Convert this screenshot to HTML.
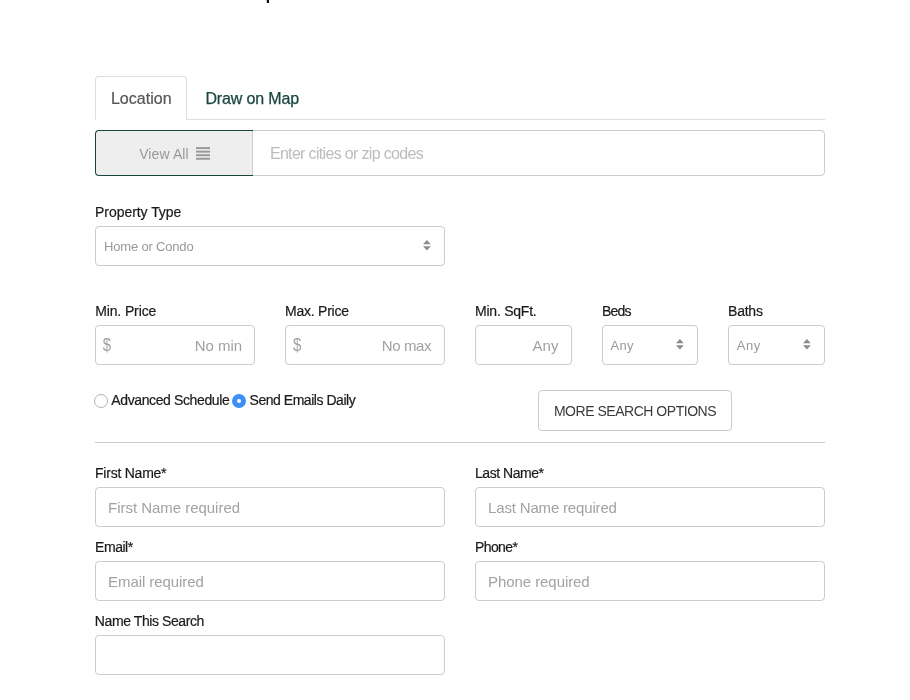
<!DOCTYPE html>
<html lang="en">
<head>
<meta charset="utf-8">
<title>Property Search</title>
<style>
*{box-sizing:border-box;margin:0;padding:0}
html,body{width:910px;height:700px;overflow:hidden;background:#fff}
body{font-family:"Liberation Sans",sans-serif;font-size:14px;color:#222;position:relative;will-change:transform}
.abs{position:absolute;white-space:nowrap}
.t{position:absolute;white-space:nowrap;line-height:20px;height:20px}
.lbl{font-weight:400;color:#1a1a1a;font-size:14px;-webkit-text-stroke:0.2px #1a1a1a}
.box{position:absolute;border:1px solid #ccc;border-radius:4px;background:#fff}
.ph{color:#a2a2a2}
.sv{color:#999}
</style>
</head>
<body>
<!-- heading remnant -->
<h2 class="t" id="h" style="left:132px;top:-26.5px;font-size:26px;line-height:30px;height:30px;color:#111;font-weight:400">Market Snapshot</h2>

<!-- tabs -->
<div class="abs" style="left:95px;top:119px;width:730px;height:1px;background:#ddd"></div>
<div class="abs" id="tab1" style="left:95px;top:76px;width:92px;height:44px;border:1px solid #ddd;border-bottom-color:#fff;border-radius:4px 4px 0 0;background:#fff"></div>
<span class="t" id="t_loc" style="left:110.9px;top:87px;font-size:16px;line-height:23px;height:23px;color:#555;-webkit-text-stroke:0.2px #555;letter-spacing:0.04px">Location</span>
<span class="t" id="t_draw" style="left:205.4px;top:87px;font-size:16px;line-height:23px;height:23px;color:#18453f;-webkit-text-stroke:0.25px #18453f;letter-spacing:-0.15px">Draw on Map</span>

<!-- location input group -->
<div class="box" id="loc_in" style="left:252px;top:130px;width:573px;height:46px;border-radius:0 4px 4px 0"></div>
<div class="abs" id="viewall" style="left:95px;top:130px;width:158px;height:46px;border:1px solid #18453f;border-right:0;border-radius:4px 0 0 4px;background:#eee"></div>
<div class="abs" style="left:252px;top:131px;width:1px;height:44px;background:#ccc"></div>
<span class="t" id="t_view" style="left:139.2px;top:144px;font-size:14px;color:#999;letter-spacing:0.1px">View All</span>
<svg class="abs" id="ic_bars" style="left:196px;top:147px" width="14" height="13" viewBox="0 0 14 13"><g fill="#999"><rect x="0" y="0.1" width="14" height="2"/><rect x="0" y="3.65" width="14" height="2"/><rect x="0" y="7.2" width="14" height="2"/><rect x="0" y="10.75" width="14" height="2"/></g></svg>
<span class="t ph" id="t_enter" style="left:269.9px;top:144px;font-size:16px;color:#bcbcbc;letter-spacing:-0.67px">Enter cities or zip codes</span>

<!-- property type -->
<label class="t lbl" id="l_prop" style="left:95.05px;top:202px;letter-spacing:-0.05px">Property Type</label>
<div class="box" id="sel_prop" style="left:95px;top:226px;width:350px;height:40px"></div>
<span class="t sv" id="t_home" style="left:104px;top:237px;font-size:13px;letter-spacing:-0.18px">Home or Condo</span>

<!-- price row -->
<label class="t lbl" id="l_minp" style="left:95.15px;top:301px;letter-spacing:-0.12px">Min. Price</label>
<label class="t lbl" id="l_maxp" style="left:285px;top:301px;letter-spacing:-0.24px">Max. Price</label>
<label class="t lbl" id="l_sqft" style="left:475.05px;top:301px;letter-spacing:-0.24px">Min. SqFt.</label>
<label class="t lbl" id="l_beds" style="left:602px;top:301px;letter-spacing:-0.83px">Beds</label>
<label class="t lbl" id="l_baths" style="left:728.05px;top:301px;letter-spacing:-0.23px">Baths</label>
<div class="box" style="left:95px;top:325px;width:160px;height:40px"></div>
<div class="box" style="left:285px;top:325px;width:160px;height:40px"></div>
<div class="box" style="left:475px;top:325px;width:97px;height:40px"></div>
<div class="box" style="left:602px;top:325px;width:96px;height:40px"></div>
<div class="box" style="left:728px;top:325px;width:97px;height:40px"></div>
<span class="t ph" id="t_d1" style="left:102.85px;top:334.5px;font-size:15px;transform:scaleY(1.23);transform-origin:50% 50%">$</span>
<span class="t ph" id="t_nomin" style="left:194.75px;top:336px;font-size:15px;letter-spacing:-0.01px">No min</span>
<span class="t ph" id="t_d2" style="left:292.95px;top:334.5px;font-size:15px;transform:scaleY(1.23);transform-origin:50% 50%">$</span>
<span class="t ph" id="t_nomax" style="left:381.75px;top:336px;font-size:15px;letter-spacing:-0.38px">No max</span>
<span class="t ph" id="t_any0" style="left:532.5px;top:336px;font-size:15px;letter-spacing:0.12px">Any</span>
<span class="t sv" id="t_any1" style="left:610.5px;top:336px;font-size:13px;letter-spacing:0.3px">Any</span>
<span class="t sv" id="t_any2" style="left:736.85px;top:336px;font-size:13px;letter-spacing:0.45px">Any</span>

<svg class="abs" id="c_prop" style="left:422.9px;top:240px" width="7.8" height="10.6" viewBox="0 0 7.8 10.6"><path d="M3.9 0 L7.8 4.3 L0 4.3 Z M0 6.2 L7.8 6.2 L3.9 10.6 Z" fill="#8c8c8c"/></svg>
<svg class="abs" id="c_beds" style="left:675.9px;top:339.1px" width="7.8" height="10.6" viewBox="0 0 7.8 10.6"><path d="M3.9 0 L7.8 4.3 L0 4.3 Z M0 6.2 L7.8 6.2 L3.9 10.6 Z" fill="#8c8c8c"/></svg>
<svg class="abs" id="c_baths" style="left:802.9px;top:339.1px" width="7.8" height="10.6" viewBox="0 0 7.8 10.6"><path d="M3.9 0 L7.8 4.3 L0 4.3 Z M0 6.2 L7.8 6.2 L3.9 10.6 Z" fill="#8c8c8c"/></svg>
<!-- radios -->
<span class="abs" id="r1" style="left:94px;top:394px;width:14px;height:14px;border:1px solid #b2b2b2;border-radius:50%;background:#fff"></span>
<span class="t lbl" id="t_adv" style="left:111.3px;top:390px;font-size:14px;font-weight:400;letter-spacing:-0.38px">Advanced Schedule</span>
<span class="abs" id="r2" style="left:232px;top:394px;width:14px;height:14px;border-radius:50%;background:#3b8ff7"></span>
<span class="abs" id="r2d" style="left:236.75px;top:398.75px;width:4.5px;height:4.5px;border-radius:50%;background:#fff"></span>
<span class="t lbl" id="t_send" style="left:249.5px;top:390px;font-size:14px;font-weight:400;letter-spacing:-0.46px">Send Emails Daily</span>

<!-- more button -->
<div class="box" id="morebtn" style="left:538px;top:390px;width:194px;height:41px"></div>
<span class="t" id="t_more" style="left:553.9px;top:401px;font-size:14px;color:#3a3a3a;letter-spacing:-0.47px">MORE SEARCH OPTIONS</span>

<!-- hr -->
<div class="abs" style="left:95px;top:442px;width:730px;height:1px;background:#ccc"></div>

<!-- contact -->
<label class="t lbl" id="l_first" style="left:95.05px;top:463px;letter-spacing:-0.24px">First Name*</label>
<label class="t lbl" id="l_last" style="left:475.05px;top:463px;letter-spacing:-0.46px">Last Name*</label>
<div class="box" style="left:95px;top:487px;width:350px;height:40px"></div>
<div class="box" style="left:475px;top:487px;width:350px;height:40px"></div>
<span class="t ph" id="t_first" style="left:108.05px;top:498px;font-size:15px;letter-spacing:-0.03px">First Name required</span>
<span class="t ph" id="t_last" style="left:488.05px;top:498px;font-size:15px;letter-spacing:-0.17px">Last Name required</span>

<label class="t lbl" id="l_email" style="left:95.05px;top:537px;letter-spacing:-0.46px">Email*</label>
<label class="t lbl" id="l_phone" style="left:475.05px;top:537px;letter-spacing:-0.62px">Phone*</label>
<div class="box" style="left:95px;top:561px;width:350px;height:40px"></div>
<div class="box" style="left:475px;top:561px;width:350px;height:40px"></div>
<span class="t ph" id="t_email" style="left:108.05px;top:572px;font-size:15px;letter-spacing:-0.07px">Email required</span>
<span class="t ph" id="t_phone" style="left:488.05px;top:572px;font-size:15px;letter-spacing:-0.07px">Phone required</span>

<label class="t lbl" id="l_name" style="left:94.85px;top:611px;letter-spacing:-0.41px">Name This Search</label>
<div class="box" style="left:95px;top:635px;width:350px;height:40px"></div>
</body>
</html>
